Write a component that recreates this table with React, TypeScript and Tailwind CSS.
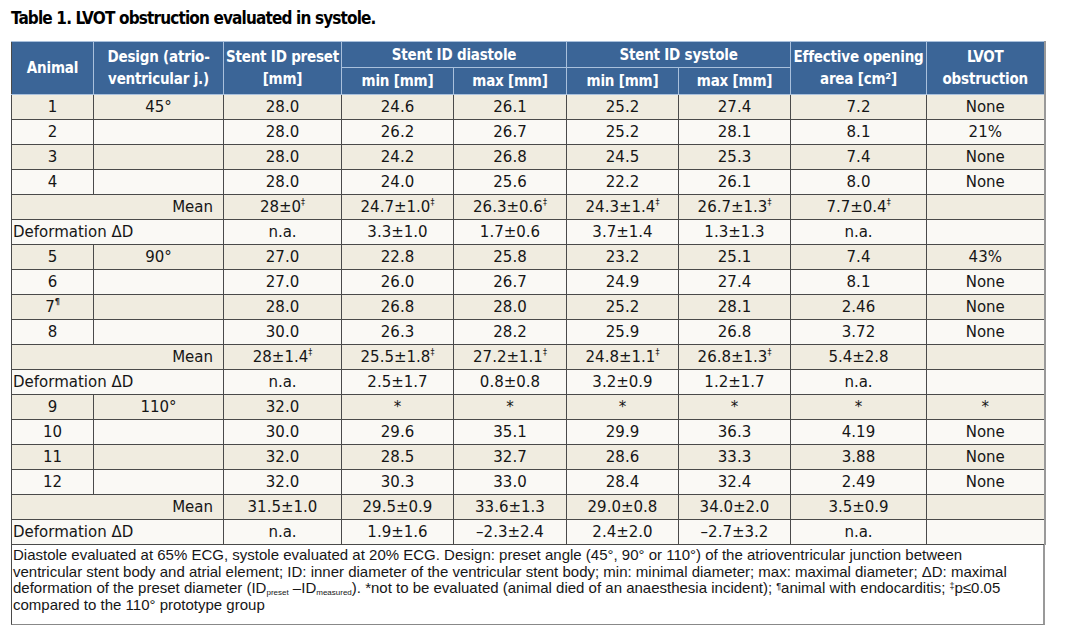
import React from 'react';

type Row = { kind: 'animal' | 'mean' | 'def'; cells: string[] };

const rows: Row[] = [
  { kind: 'animal', cells: ['1', '45°', '28.0', '24.6', '26.1', '25.2', '27.4', '7.2', 'None'] },
  { kind: 'animal', cells: ['2', '', '28.0', '26.2', '26.7', '25.2', '28.1', '8.1', '21%'] },
  { kind: 'animal', cells: ['3', '', '28.0', '24.2', '26.8', '24.5', '25.3', '7.4', 'None'] },
  { kind: 'animal', cells: ['4', '', '28.0', '24.0', '25.6', '22.2', '26.1', '8.0', 'None'] },
  { kind: 'mean', cells: ['28±0‡', '24.7±1.0‡', '26.3±0.6‡', '24.3±1.4‡', '26.7±1.3‡', '7.7±0.4‡', ''] },
  { kind: 'def', cells: ['n.a.', '3.3±1.0', '1.7±0.6', '3.7±1.4', '1.3±1.3', 'n.a.', ''] },
  { kind: 'animal', cells: ['5', '90°', '27.0', '22.8', '25.8', '23.2', '25.1', '7.4', '43%'] },
  { kind: 'animal', cells: ['6', '', '27.0', '26.0', '26.7', '24.9', '27.4', '8.1', 'None'] },
  { kind: 'animal', cells: ['7¶', '', '28.0', '26.8', '28.0', '25.2', '28.1', '2.46', 'None'] },
  { kind: 'animal', cells: ['8', '', '30.0', '26.3', '28.2', '25.9', '26.8', '3.72', 'None'] },
  { kind: 'mean', cells: ['28±1.4‡', '25.5±1.8‡', '27.2±1.1‡', '24.8±1.1‡', '26.8±1.3‡', '5.4±2.8', ''] },
  { kind: 'def', cells: ['n.a.', '2.5±1.7', '0.8±0.8', '3.2±0.9', '1.2±1.7', 'n.a.', ''] },
  { kind: 'animal', cells: ['9', '110°', '32.0', '*', '*', '*', '*', '*', '*'] },
  { kind: 'animal', cells: ['10', '', '30.0', '29.6', '35.1', '29.9', '36.3', '4.19', 'None'] },
  { kind: 'animal', cells: ['11', '', '32.0', '28.5', '32.7', '28.6', '33.3', '3.88', 'None'] },
  { kind: 'animal', cells: ['12', '', '32.0', '30.3', '33.0', '28.4', '32.4', '2.49', 'None'] },
  { kind: 'mean', cells: ['31.5±1.0', '29.5±0.9', '33.6±1.3', '29.0±0.8', '34.0±2.0', '3.5±0.9', ''] },
  { kind: 'def', cells: ['n.a.', '1.9±1.6', '–2.3±2.4', '2.4±2.0', '–2.7±3.2', 'n.a.', ''] },
];

const colWidths = [82, 130, 118, 112, 113, 112, 112, 136, 118];

function Val({ v }: { v: string }) {
  const last = v.slice(-1);
  if (last === '‡' || last === '¶') {
    return (
      <>
        {v.slice(0, -1)}
        <sup className={`relative -top-[1px] align-super text-[8px] leading-none ${last === '¶' ? 'font-bold' : 'font-normal'}`}>
          {last}
        </sup>
      </>
    );
  }
  return <>{v}</>;
}

const td = 'h-[25px] border border-[#4a4a4a] p-0 text-center leading-none';
const th = 'border border-[#a9c0dc] px-0 py-0 text-center font-bold leading-[22px] text-white';

export default function App() {
  return (
    <div className="min-h-screen bg-white pl-[11px] text-[#161616]">
      <div className="flex h-[41px] items-center pb-[3px] font-['DejaVu_Sans_Condensed','Liberation_Sans_Narrow',sans-serif] text-[17px] font-bold font-stretch-condensed tracking-[-0.85px] text-black">
        Table 1. LVOT obstruction evaluated in systole.
      </div>

      <div className="w-[1034px]">
        <table className="w-[1034px] table-fixed border-collapse border-r-2 border-r-[#999] font-['DejaVu_Sans',sans-serif] text-[15px]">
          <colgroup>
            {colWidths.map((w, i) => (
              <col key={i} style={{ width: w }} />
            ))}
          </colgroup>
          <thead className="bg-[#3b6597] font-['DejaVu_Sans_Condensed','Liberation_Sans_Narrow',sans-serif] text-[15px] font-stretch-condensed tracking-[-0.2px]">
            <tr className="h-[26px] border-t border-t-[#333]">
              <th rowSpan={2} className={`${th} border-l-[#4a4a4a]`}>Animal</th>
              <th rowSpan={2} className={th}>
                Design (atrio-
                <br />
                ventricular j.)
              </th>
              <th rowSpan={2} className={th}>
                Stent ID preset
                <br />
                [mm]
              </th>
              <th colSpan={2} className={th}>Stent ID diastole</th>
              <th colSpan={2} className={th}>Stent ID systole</th>
              <th rowSpan={2} className={th}>
                Effective opening
                <br />
                area [cm²]
              </th>
              <th rowSpan={2} className={th}>
                LVOT
                <br />
                obstruction
              </th>
            </tr>
            <tr className="h-[27px]">
              <th className={th}>min [mm]</th>
              <th className={th}>max [mm]</th>
              <th className={th}>min [mm]</th>
              <th className={th}>max [mm]</th>
            </tr>
          </thead>
          <tbody>
            {rows.map((r, i) => {
              const bg = i % 2 === 0 ? 'bg-[#f0ece0]' : 'bg-[#faf9f5]';
              if (r.kind === 'animal') {
                return (
                  <tr key={i} className={bg}>
                    {r.cells.map((c, j) => (
                      <td key={j} className={td}>
                        <Val v={c} />
                      </td>
                    ))}
                  </tr>
                );
              }
              return (
                <tr key={i} className={bg}>
                  <td
                    colSpan={2}
                    className={`${td} ${r.kind === 'mean' ? 'pr-[10px] text-right' : 'pl-[1px] text-left'}`}
                  >
                    {r.kind === 'mean' ? 'Mean' : 'Deformation ΔD'}
                  </td>
                  {r.cells.map((c, j) => (
                    <td key={j} className={td}>
                      <Val v={c} />
                    </td>
                  ))}
                </tr>
              );
            })}
          </tbody>
        </table>
        <div className="h-[80px] border-x border-b border-l-[#4a4a4a] border-r-2 border-r-[#999] border-b-[#888] pl-[1px] pt-[2px] font-['Liberation_Sans',Arial,sans-serif] text-[15px] leading-[16.5px]">
          Diastole evaluated at 65% ECG, systole evaluated at 20% ECG. Design: preset angle (45°, 90° or 110°) of the atrioventricular junction between
          <br />
          ventricular stent body and atrial element; ID: inner diameter of the ventricular stent body; min: minimal diameter; max: maximal diameter; ΔD: maximal
          <br />
          deformation of the preset diameter (ID<sub className="text-[8px]">preset</sub> –ID<sub className="text-[8px]">measured</sub>). *not to be evaluated (animal died of an anaesthesia incident); <sup className="text-[9px]">¶</sup>animal with endocarditis; <sup className="text-[9px]">‡</sup>p≤0.05
          <br />
          compared to the 110° prototype group
        </div>
      </div>
    </div>
  );
}
